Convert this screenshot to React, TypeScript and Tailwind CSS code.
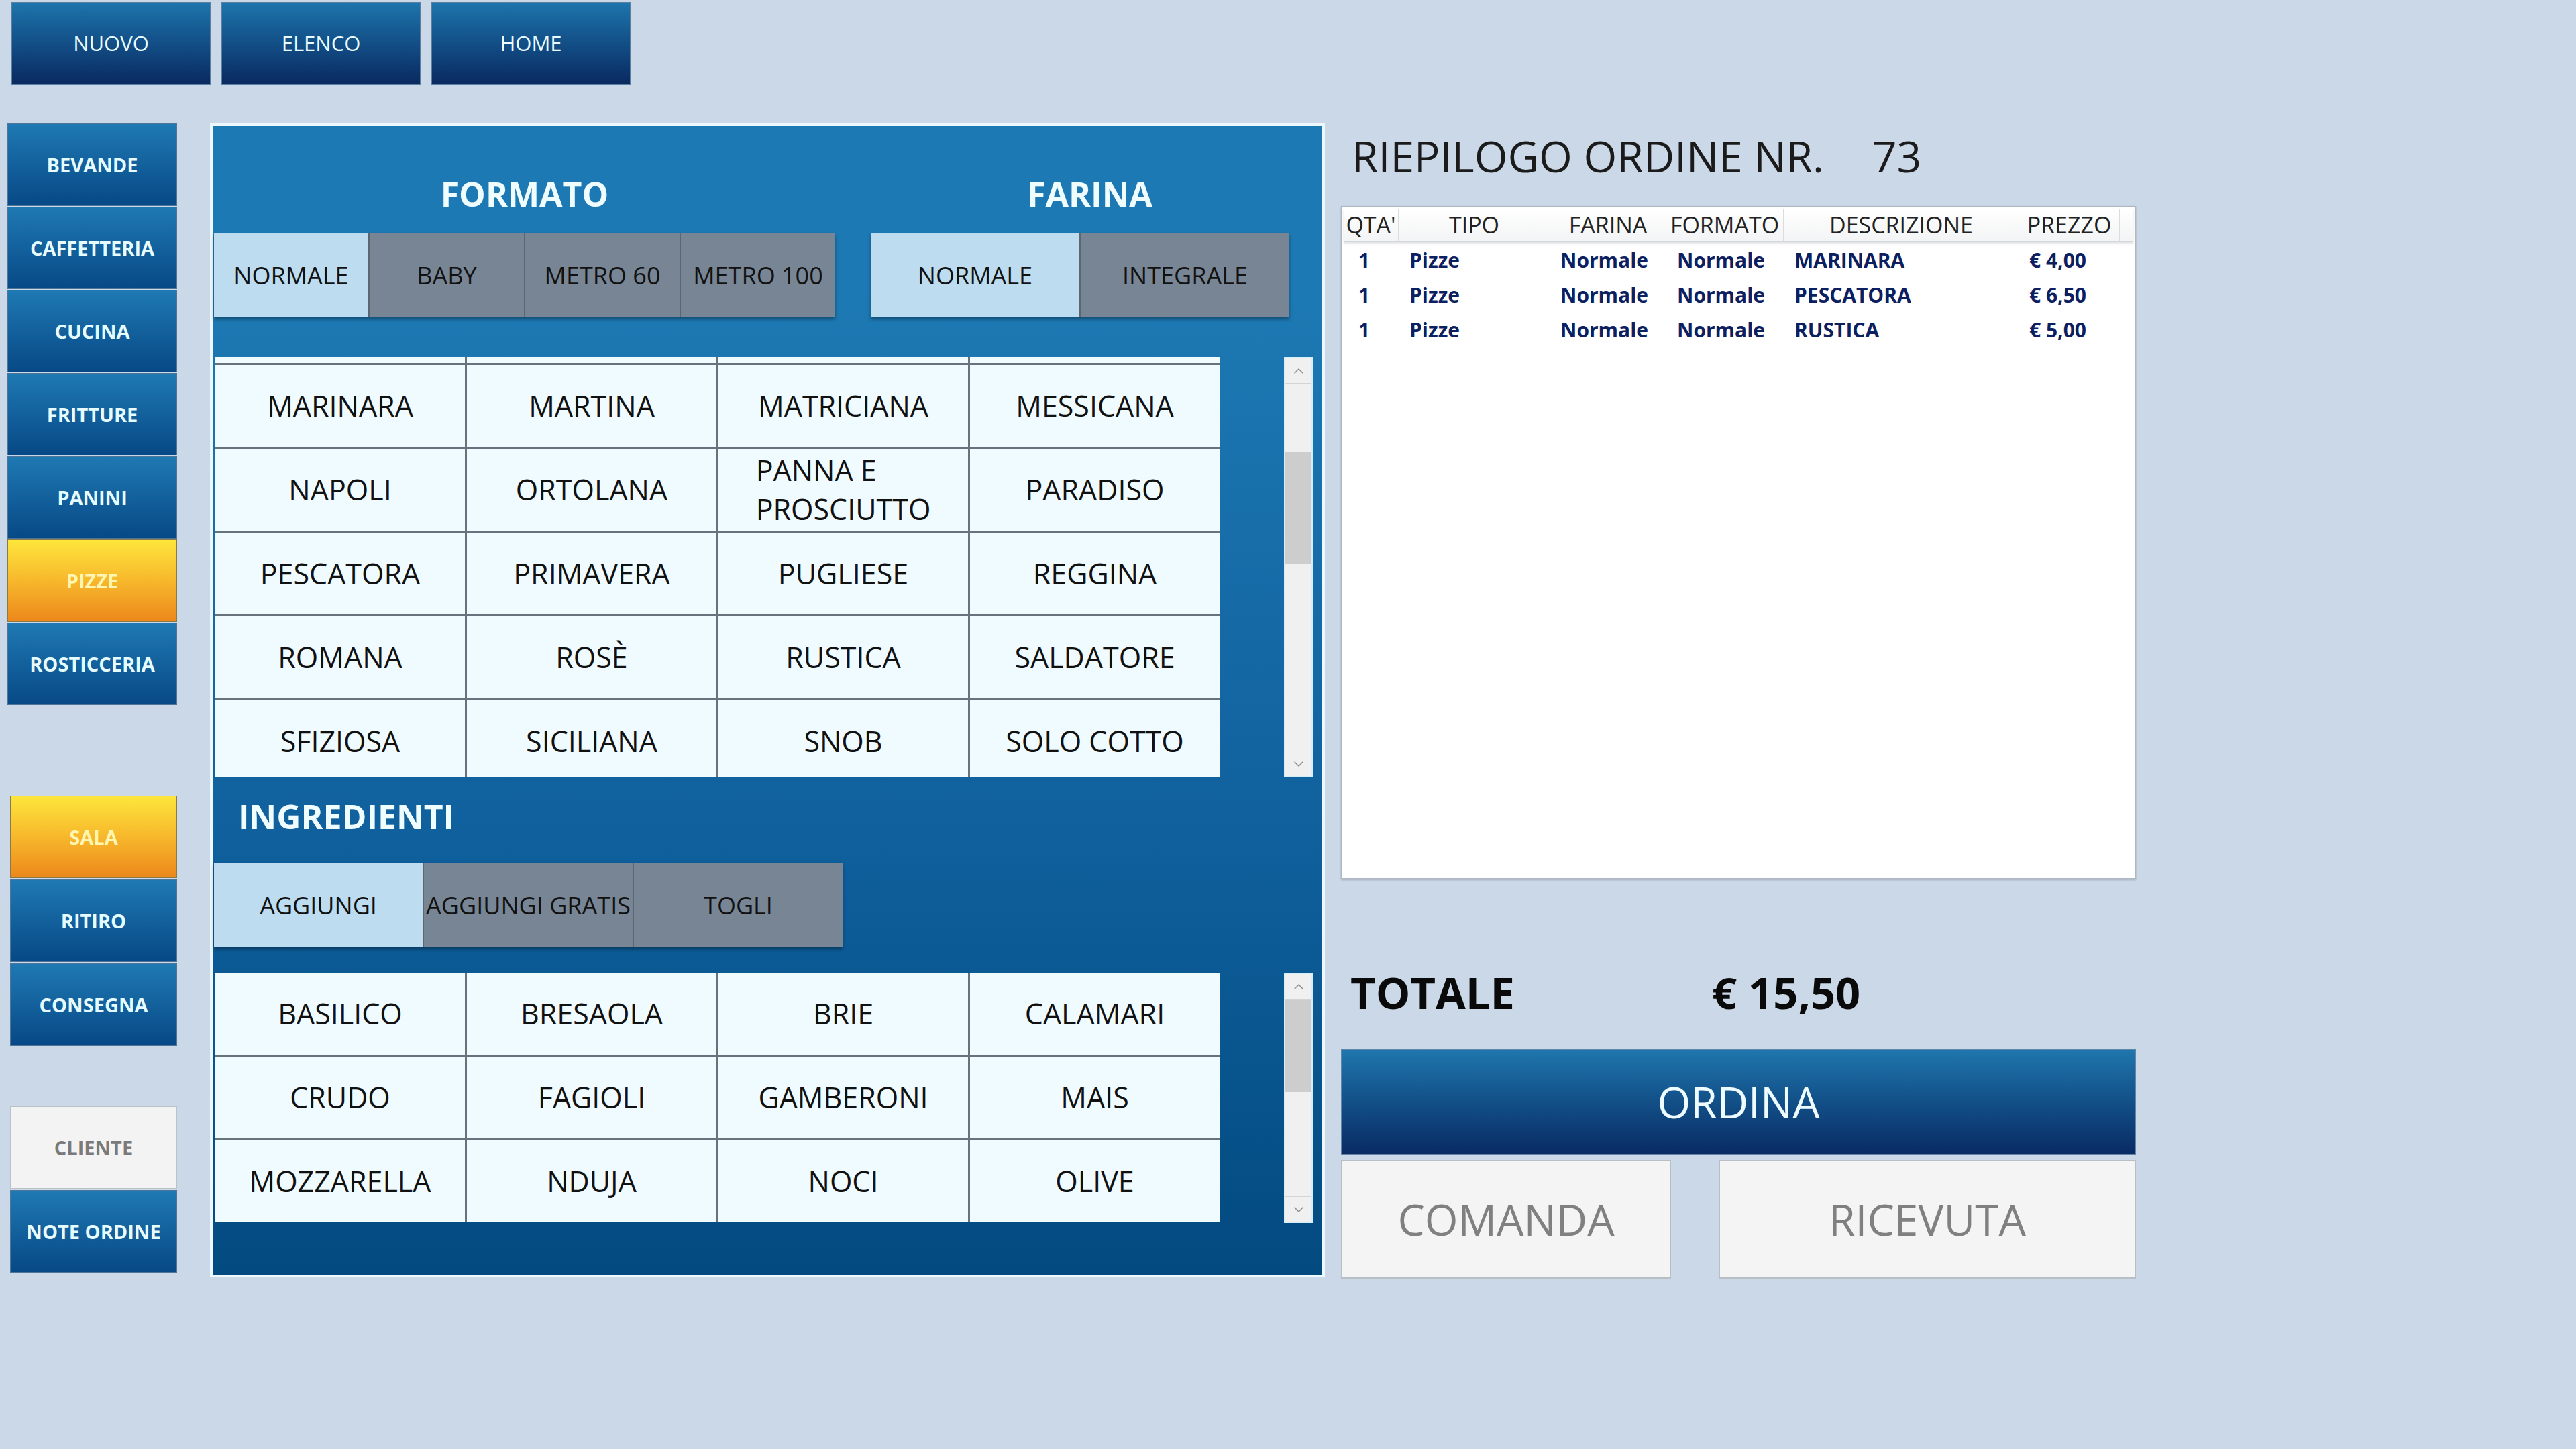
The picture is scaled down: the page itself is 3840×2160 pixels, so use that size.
import { ChevronDown, ChevronUp } from 'lucide-react'

type Cell = string

const TOP_BUTTONS = ['NUOVO', 'ELENCO', 'HOME']

const CATEGORIES = [
  { label: 'BEVANDE' },
  { label: 'CAFFETTERIA' },
  { label: 'CUCINA' },
  { label: 'FRITTURE' },
  { label: 'PANINI' },
  { label: 'PIZZE', active: true },
  { label: 'ROSTICCERIA' },
]

const SERVICE = [
  { label: 'SALA', active: true },
  { label: 'RITIRO' },
  { label: 'CONSEGNA' },
]

const PIZZE: Cell[][] = [
  ['MARINARA', 'MARTINA', 'MATRICIANA', 'MESSICANA'],
  ['NAPOLI', 'ORTOLANA', 'PANNA E\nPROSCIUTTO', 'PARADISO'],
  ['PESCATORA', 'PRIMAVERA', 'PUGLIESE', 'REGGINA'],
  ['ROMANA', 'ROSÈ', 'RUSTICA', 'SALDATORE'],
  ['SFIZIOSA', 'SICILIANA', 'SNOB', 'SOLO COTTO'],
]

const INGREDIENTI: Cell[][] = [
  ['BASILICO', 'BRESAOLA', 'BRIE', 'CALAMARI'],
  ['CRUDO', 'FAGIOLI', 'GAMBERONI', 'MAIS'],
  ['MOZZARELLA', 'NDUJA', 'NOCI', 'OLIVE'],
]

const ORDINE = [
  { qta: '1', tipo: 'Pizze', farina: 'Normale', formato: 'Normale', descr: 'MARINARA', prezzo: '€ 4,00' },
  { qta: '1', tipo: 'Pizze', farina: 'Normale', formato: 'Normale', descr: 'PESCATORA', prezzo: '€ 6,50' },
  { qta: '1', tipo: 'Pizze', farina: 'Normale', formato: 'Normale', descr: 'RUSTICA', prezzo: '€ 5,00' },
]

function SideButton({ label, active }: { label: string; active?: boolean }) {
  return (
    <div
      className={
        active
          ? 'flex h-[123px] items-center justify-center border border-[#8a7a4a] bg-linear-to-b from-[#fde63c] to-[#ec881b] text-[29px] font-bold text-[#fff6b4]'
          : 'flex h-[123px] items-center justify-center border border-[#4f7598] bg-linear-to-b from-[#1f79b3] to-[#074986] text-[29px] font-bold text-[#e6fcff]'
      }
    >
      {label}
    </div>
  )
}

function Toggle({ items, widths }: { items: string[]; widths: string }) {
  return (
    <div className="flex h-[125px] gap-[2px] bg-[#5b6670] shadow-[0_3px_5px_rgba(0,0,0,0.35)]">
      {items.map((item, i) => (
        <div
          key={item}
          className={
            (i === 0 ? 'bg-[#bddcf0] ' : 'bg-[#778594] ') +
            widths +
            ' flex items-center justify-center whitespace-nowrap text-[36px] text-[#111]'
          }
        >
          {item}
        </div>
      ))}
    </div>
  )
}

function Grid({ rows, sliver }: { rows: Cell[][]; sliver?: boolean }) {
  return (
    <div className="grid w-[1497px] grid-cols-4 gap-[3px] bg-[#66737c]">
      {sliver &&
        [0, 1, 2, 3].map((i) => <div key={'s' + i} className="h-[9px] bg-[#effbff]" />)}
      {rows.flat().map((name) => (
        <div key={name} className="flex h-[122px] items-center justify-center bg-[#effbff]">
          <span className="inline-block whitespace-pre-line text-left text-[43px] leading-[58px] text-[#111]">
            {name}
          </span>
        </div>
      ))}
    </div>
  )
}

function ScrollBar({ gap, thumb }: { gap: string; thumb: string }) {
  return (
    <div className="flex h-full w-[43px] flex-col border-2 border-[#d4eff9] bg-[#f0f0f0]">
      <div className="flex h-[38px] shrink-0 items-center justify-center border-b border-[#d4d4d4]">
        <ChevronUp size={24} strokeWidth={1.5} className="text-[#8c8c8c]" />
      </div>
      <div className="flex flex-1 flex-col">
        <div className={gap} />
        <div className={'bg-[#cdcdcd] ' + thumb} />
      </div>
      <div className="flex h-[38px] shrink-0 items-center justify-center border-t border-[#d4d4d4]">
        <ChevronDown size={24} strokeWidth={1.5} className="text-[#8c8c8c]" />
      </div>
    </div>
  )
}

export default function App() {
  return (
    <div className="h-[2160px] w-[3840px] overflow-hidden bg-[#cbd8e7] font-['Open_Sans',sans-serif]">
      {/* barra superiore */}
      <div className="flex gap-[16px] pl-[17px] pt-[3px]">
        {TOP_BUTTONS.map((b) => (
          <div
            key={b}
            className="flex h-[123px] w-[297px] items-center justify-center border border-[#5d7f9f] bg-linear-to-b from-[#1e75ad] to-[#0a2a61] text-[31px] text-[#eafcff]"
          >
            {b}
          </div>
        ))}
      </div>

      <div className="mt-[58px] flex items-start">
        {/* categorie */}
        <div className="flex flex-col">
          <div className="ml-[11px] flex w-[253px] flex-col gap-[1px]">
            {CATEGORIES.map((c) => (
              <SideButton key={c.label} label={c.label} active={c.active} />
            ))}
          </div>
          <div className="ml-[15px] mt-[135px] flex w-[249px] flex-col gap-[2px]">
            {SERVICE.map((c) => (
              <SideButton key={c.label} label={c.label} active={c.active} />
            ))}
          </div>
          <div className="ml-[15px] mt-[90px] flex w-[249px] flex-col gap-[2px]">
            <div className="flex h-[123px] items-center justify-center border border-[#b9c1c9] bg-[#f3f3f3] text-[29px] font-bold text-[#7a7a7a]">
              CLIENTE
            </div>
            <SideButton label="NOTE ORDINE" />
          </div>
        </div>

        {/* pannello prodotti */}
        <div className="ml-[49px] flex h-[1720px] w-[1662px] flex-col border-4 border-[#ecf8fd] bg-linear-to-b from-[#1d79b3] from-15% via-[#10619e] via-60% to-[#034a80]">
          <div className="mt-[76px] flex pl-[2px]">
            <div className="w-[926px] text-center text-[50px] font-bold leading-none text-[#f0fdff]">FORMATO</div>
            <div className="ml-[53px] w-[623px] pl-[30px] text-center text-[50px] font-bold leading-none text-[#f0fdff]">FARINA</div>
          </div>
          <div className="mt-[34px] flex pl-[2px]">
            <Toggle items={['NORMALE', 'BABY', 'METRO 60', 'METRO 100']} widths="w-[230px]" />
            <div className="ml-[53px]">
              <Toggle items={['NORMALE', 'INTEGRALE']} widths="w-[311px]" />
            </div>
          </div>

          <div className="mt-[59px] flex h-[627px] items-start pl-[4px] pr-[14px]">
            <div className="h-[627px] overflow-hidden">
              <Grid rows={PIZZE} sliver />
            </div>
            <div className="ml-auto h-[627px]">
              <ScrollBar gap="h-[102px]" thumb="h-[167px]" />
            </div>
          </div>

          <div className="ml-[38px] mt-[33px] text-[50px] font-bold leading-none text-[#f0fdff]">INGREDIENTI</div>
          <div className="mt-[45px] flex pl-[2px]">
            <Toggle items={['AGGIUNGI', 'AGGIUNGI GRATIS', 'TOGLI']} widths="w-[311px]" />
          </div>

          <div className="mt-[38px] flex h-[373px] items-start pl-[4px] pr-[14px]">
            <Grid rows={INGREDIENTI} />
            <div className="ml-auto h-[373px]">
              <ScrollBar gap="h-0" thumb="h-[138px]" />
            </div>
          </div>
        </div>

        {/* riepilogo ordine */}
        <div className="ml-[24px] flex w-[1185px] flex-col">
          <div className="mt-[17px] flex pl-[16px] text-[64px] leading-none text-[#1b1b1b]">
            <span>RIEPILOGO ORDINE NR.</span>
            <span className="ml-[72px]">73</span>
          </div>

          <div className="mt-[42px] h-[1004px] border-2 border-[#aeb8c2] bg-white p-[2px] shadow-[0_1px_3px_rgba(0,0,0,0.2)]">
            <div className="flex h-[50px] border-b-2 border-[#d2d6da] bg-linear-to-b from-white to-[#f3f4f5] text-[34px] leading-none text-[#222] shadow-[0_2px_3px_rgba(0,0,0,0.12)]">
              <div className="flex w-[82px] items-center justify-center border-r border-[#dcdcdc]">QTA'</div>
              <div className="flex w-[226px] items-center justify-center border-r border-[#dcdcdc]">TIPO</div>
              <div className="flex w-[173px] items-center justify-center border-r border-[#dcdcdc]">FARINA</div>
              <div className="flex w-[175px] items-center justify-center border-r border-[#dcdcdc]">FORMATO</div>
              <div className="flex w-[351px] items-center justify-center border-r border-[#dcdcdc]">DESCRIZIONE</div>
              <div className="flex w-[150px] items-center justify-center border-r border-[#dcdcdc]">PREZZO</div>
            </div>
            {ORDINE.map((r) => (
              <div key={r.descr} className="flex h-[52px] items-center text-[30px] font-bold text-[#0c2060]">
                <div className="w-[82px] pl-[22px]">{r.qta}</div>
                <div className="w-[226px] pl-[16px]">{r.tipo}</div>
                <div className="w-[173px] pl-[15px]">{r.farina}</div>
                <div className="w-[175px] pl-[16px]">{r.formato}</div>
                <div className="w-[351px] pl-[16px]">{r.descr}</div>
                <div className="w-[150px] pl-[15px]">{r.prezzo}</div>
              </div>
            ))}
          </div>

          <div className="mt-[136px] flex text-[65px] font-bold leading-none text-[#0a0a0a]">
            <span className="ml-[14px] w-[539px]">TOTALE</span>
            <span>€ 15,50</span>
          </div>

          <div className="mt-[51px] flex h-[159px] items-center justify-center border-2 border-[#5f86a8] bg-linear-to-b from-[#1f76ad] to-[#0a2b64] text-[64px] text-[#eefcff]">
            ORDINA
          </div>

          <div className="mt-[7px] flex h-[177px]">
            <div className="flex w-[492px] items-center justify-center border-2 border-[#b7bec6] bg-[#f4f4f4] text-[64px] text-[#808080]">
              COMANDA
            </div>
            <div className="ml-auto flex w-[622px] items-center justify-center border-2 border-[#b7bec6] bg-[#f4f4f4] text-[64px] text-[#808080]">
              RICEVUTA
            </div>
          </div>
        </div>
      </div>
    </div>
  )
}
